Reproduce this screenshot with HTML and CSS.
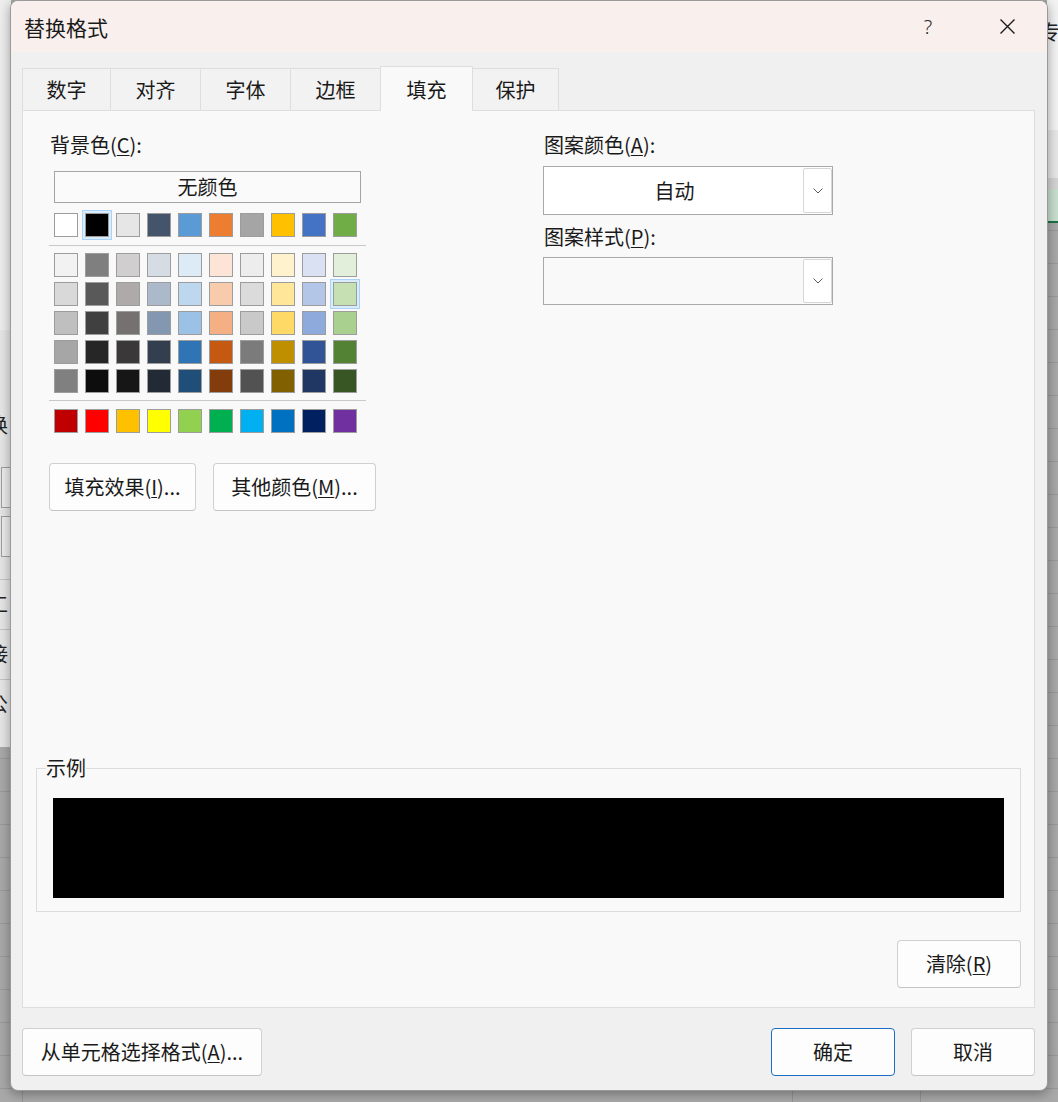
FILE: index.html
```html
<!DOCTYPE html>
<html lang="zh-CN">
<head>
<meta charset="utf-8">
<title>替换格式</title>
<link rel="stylesheet" href="styles.css">
</head>
<body>
<div class="desktop">
  <div class="behind-top">专</div>
  <div class="behind-window">
    <div class="bw-text bw-first">换</div>
    <div class="bw-input"></div>
    <div class="bw-input"></div>
    <div class="bw-row">工</div>
    <div class="bw-row">接</div>
    <div class="bw-row">公</div>
  </div>

  <div class="dialog">
    <div class="titlebar">
      <div class="title">替换格式</div>
      <div class="tb-btn help">?</div>
      <div class="tb-btn close">
        <svg width="15" height="15" viewBox="0 0 15 15"><path d="M0.5 0.5 L14.5 14.5 M14.5 0.5 L0.5 14.5" stroke="#1a1a1a" stroke-width="1.4" fill="none"/></svg>
      </div>
    </div>

    <div class="dlg-body">
      <div class="tabs">
        <div class="tab t1">数字</div>
        <div class="tab t2">对齐</div>
        <div class="tab t3">字体</div>
        <div class="tab t4">边框</div>
        <div class="tab t5 active">填充</div>
        <div class="tab t6">保护</div>
      </div>

      <div class="panel">
        <div class="top">
          <div class="left-col">
            <div class="label">背景色(<u>C</u>):</div>
            <div class="nocolor">无颜色</div>
            <div class="swatches theme">
              <div class="sw" style="background:#FFFFFF"></div>
              <div class="sw selected" style="background:#000000"></div>
              <div class="sw" style="background:#E7E6E6"></div>
              <div class="sw" style="background:#44546A"></div>
              <div class="sw" style="background:#5B9BD5"></div>
              <div class="sw" style="background:#ED7D31"></div>
              <div class="sw" style="background:#A5A5A5"></div>
              <div class="sw" style="background:#FFC000"></div>
              <div class="sw" style="background:#4472C4"></div>
              <div class="sw" style="background:#70AD47"></div>
            </div>
            <div class="sep"></div>
            <div class="swatches tints">
              <div class="sw" style="background:#F2F2F2"></div>
              <div class="sw" style="background:#7F7F7F"></div>
              <div class="sw" style="background:#D0CECE"></div>
              <div class="sw" style="background:#D6DCE4"></div>
              <div class="sw" style="background:#DDEBF7"></div>
              <div class="sw" style="background:#FCE4D6"></div>
              <div class="sw" style="background:#EDEDED"></div>
              <div class="sw" style="background:#FFF2CC"></div>
              <div class="sw" style="background:#D9E1F2"></div>
              <div class="sw" style="background:#E2EFDA"></div>

              <div class="sw" style="background:#D9D9D9"></div>
              <div class="sw" style="background:#595959"></div>
              <div class="sw" style="background:#AEAAAA"></div>
              <div class="sw" style="background:#ACB9CA"></div>
              <div class="sw" style="background:#BDD7EE"></div>
              <div class="sw" style="background:#F8CBAD"></div>
              <div class="sw" style="background:#DBDBDB"></div>
              <div class="sw" style="background:#FFE699"></div>
              <div class="sw" style="background:#B4C6E7"></div>
              <div class="sw hover" style="background:#C6E0B4"></div>

              <div class="sw" style="background:#BFBFBF"></div>
              <div class="sw" style="background:#404040"></div>
              <div class="sw" style="background:#757171"></div>
              <div class="sw" style="background:#8497B0"></div>
              <div class="sw" style="background:#9BC2E6"></div>
              <div class="sw" style="background:#F4B084"></div>
              <div class="sw" style="background:#C9C9C9"></div>
              <div class="sw" style="background:#FFD966"></div>
              <div class="sw" style="background:#8EA9DB"></div>
              <div class="sw" style="background:#A9D08E"></div>

              <div class="sw" style="background:#A6A6A6"></div>
              <div class="sw" style="background:#262626"></div>
              <div class="sw" style="background:#3A3838"></div>
              <div class="sw" style="background:#333F4F"></div>
              <div class="sw" style="background:#2F75B5"></div>
              <div class="sw" style="background:#C65911"></div>
              <div class="sw" style="background:#7B7B7B"></div>
              <div class="sw" style="background:#BF8F00"></div>
              <div class="sw" style="background:#305496"></div>
              <div class="sw" style="background:#548235"></div>

              <div class="sw" style="background:#808080"></div>
              <div class="sw" style="background:#0D0D0D"></div>
              <div class="sw" style="background:#161616"></div>
              <div class="sw" style="background:#222B35"></div>
              <div class="sw" style="background:#1F4E78"></div>
              <div class="sw" style="background:#833C0C"></div>
              <div class="sw" style="background:#525252"></div>
              <div class="sw" style="background:#806000"></div>
              <div class="sw" style="background:#203764"></div>
              <div class="sw" style="background:#375623"></div>
            </div>
            <div class="sep sep2"></div>
            <div class="swatches std">
              <div class="sw" style="background:#C00000"></div>
              <div class="sw" style="background:#FF0000"></div>
              <div class="sw" style="background:#FFC000"></div>
              <div class="sw" style="background:#FFFF00"></div>
              <div class="sw" style="background:#92D050"></div>
              <div class="sw" style="background:#00B050"></div>
              <div class="sw" style="background:#00B0F0"></div>
              <div class="sw" style="background:#0070C0"></div>
              <div class="sw" style="background:#002060"></div>
              <div class="sw" style="background:#7030A0"></div>
            </div>
            <div class="btn-row">
              <button class="btn fx">填充效果(<u>I</u>)...</button>
              <button class="btn more">其他颜色(<u>M</u>)...</button>
            </div>
          </div>

          <div class="right-col">
            <div class="label">图案颜色(<u>A</u>):</div>
            <div class="dropdown dd1">
              <div class="dd-text">自动</div>
              <div class="dd-btn">
                <svg width="10" height="6" viewBox="0 0 10 6"><path d="M0.5 0.5 L5 5 L9.5 0.5" stroke="#5a5a5a" stroke-width="1" fill="none"/></svg>
              </div>
            </div>
            <div class="label label2">图案样式(<u>P</u>):</div>
            <div class="dropdown dd2">
              <div class="dd-text"></div>
              <div class="dd-btn">
                <svg width="10" height="6" viewBox="0 0 10 6"><path d="M0.5 0.5 L5 5 L9.5 0.5" stroke="#5a5a5a" stroke-width="1" fill="none"/></svg>
              </div>
            </div>
          </div>
        </div>

        <fieldset class="sample">
          <legend>示例</legend>
          <div class="sample-box"></div>
        </fieldset>

        <div class="clear-row">
          <button class="btn clear">清除(<u>R</u>)</button>
        </div>
      </div>

      <div class="footer">
        <button class="btn pick">从单元格选择格式(<u>A</u>)...</button>
        <div class="footer-right">
          <button class="btn ok">确定</button>
          <button class="btn cancel">取消</button>
        </div>
      </div>
    </div>
  </div>
</div>
</body>
</html>
```

FILE: styles.css
```css
* { box-sizing: border-box; }

html, body {
  margin: 0;
  padding: 0;
}

body {
  width: 1058px;
  height: 1102px;
  overflow: hidden;
  font-family: "Noto Sans CJK SC", "Noto Sans", sans-serif;
  color: #1a1a1a;
}

u {
  text-decoration: underline;
  text-decoration-thickness: 1px;
  text-underline-offset: 2px;
}

/* ---------- backdrop (Excel window behind) ---------- */
.desktop {
  position: relative;
  width: 1058px;
  height: 1102px;
  overflow: hidden;
  background:
    linear-gradient(#1e7145, #1e7145) right 0 top 221px / 11px 2px no-repeat,
    linear-gradient(#c7dfd0, #c7dfd0) right 0 top 189px / 11px 32px no-repeat,
    linear-gradient(#d4d4d4, #d4d4d4) right 0 top 178px / 11px 11px no-repeat,
    linear-gradient(#e7e7e7, #e7e7e7) right 0 top 130px / 11px 48px no-repeat,
    linear-gradient(#f3f3f3, #f3f3f3) right 0 top 0 / 11px 130px no-repeat,
    linear-gradient(#eeeeee, #eeeeee) left 0 top 0 / 11px 330px no-repeat,
    linear-gradient(#959595, #959595) 22px 1090px / 1px 12px no-repeat,
    linear-gradient(#959595, #959595) 792px 1090px / 1px 12px no-repeat,
    linear-gradient(#959595, #959595) 920px 1090px / 1px 12px no-repeat,
    repeating-linear-gradient(to bottom, transparent 0 32px, #999999 32px 33px),
    #a9a9a9;
}

.behind-top {
  position: absolute;
  left: 1040px;
  top: 20px;
  font-size: 20px;
  line-height: 24px;
  color: #222;
}

.behind-window {
  position: absolute;
  left: -300px;
  top: 330px;
  width: 312px;
  height: 417px;
  background: #e6e6e6;
  padding-left: 288px;
  padding-top: 83px;
  display: flex;
  flex-direction: column;
  font-size: 20px;
  line-height: 24px;
  color: #222;
}

.bw-input {
  margin-left: 13px;
  width: 40px;
  height: 41px;
  border: 1px solid #9e9e9e;
  background: #ececec;
  margin-top: 8px;
}

.bw-first + .bw-input { margin-top: 30px; }

.bw-row {
  height: 50px;
  padding-top: 12px;
  border-top: 1px solid #c4c4c4;
}

.bw-input + .bw-row { margin-top: 22px; }

/* ---------- dialog ---------- */
.dialog {
  position: absolute;
  left: 10px;
  top: 0;
  width: 1038px;
  height: 1091px;
  border: 1px solid #9a9a9a;
  border-radius: 8px;
  background: #f0f0f0;
  overflow: hidden;
  box-shadow: 0 3px 12px rgba(0, 0, 0, 0.35);
}

.titlebar {
  height: 51px;
  background: #f9f0ee;
  display: flex;
  align-items: center;
  padding-left: 13px;
  padding-right: 17px;
}

.title {
  font-size: 21px;
  line-height: 26px;
  flex: 1;
  color: #1a1a1a;
}

.tb-btn {
  display: flex;
  align-items: center;
  justify-content: center;
  height: 40px;
}

.help {
  width: 40px;
  margin-right: 36px;
  font-family: "Noto Sans", sans-serif;
  font-size: 20px;
  font-weight: 300;
  color: #2a2a2a;
}

.close {
  width: 46px;
}

.dlg-body {
  padding: 14px 12px 0 11px;
}

/* tabs */
.tabs {
  display: flex;
  align-items: flex-end;
  height: 44px;
}

.tab {
  height: 42px;
  border-left: 1px solid #dedede;
  border-top: 1px solid #dedede;
  background: #f2f2f2;
  font-size: 20px;
  line-height: 24px;
  display: flex;
  align-items: center;
  justify-content: center;
}

.t1 { width: 88px; }
.t2 { width: 90px; }
.t3 { width: 90px; }
.t4 { width: 90px; }
.t5 { width: 93px; }
.t6 { width: 87px; border-right: 1px solid #dedede; }

.tab.active {
  position: relative;
  z-index: 2;
  height: 45px;
  margin-bottom: -1px;
  margin-right: -1px;
  background: #f9f9f9;
  border-right: 1px solid #dedede;
  padding-top: 2px;
}

/* panel */
.panel {
  height: 898px;
  border: 1px solid #dedede;
  background: #f9f9f9;
  display: flex;
  flex-direction: column;
  padding: 22px 0 19px 0;
}

.top {
  display: flex;
  padding-left: 26px;
}

.left-col {
  width: 327px;
  display: flex;
  flex-direction: column;
}

.right-col {
  width: 290px;
  margin-left: 167px;
  display: flex;
  flex-direction: column;
}

.label {
  font-size: 20px;
  line-height: 24px;
  height: 24px;
  padding-left: 1px;
  white-space: nowrap;
}

.nocolor {
  margin: 14px 0 0 5px;
  width: 307px;
  height: 32px;
  border: 1px solid #a4a4a4;
  background: #fafafa;
  font-size: 20px;
  line-height: 30px;
  text-align: center;
}

.swatches {
  display: grid;
  grid-template-columns: repeat(10, 24px);
  column-gap: 7px;
  row-gap: 5px;
  margin-left: 5px;
}

.theme { margin-top: 10px; }
.tints { margin-top: 7px; }
.std { margin-top: 8px; }

.sw {
  width: 24px;
  height: 24px;
  border: 1px solid #9c9c9c;
}

.sw.selected,
.sw.hover {
  box-shadow: 0 0 0 2px #d9ecfc, 0 0 0 3px #a9d4f7;
}

.sep {
  width: 317px;
  height: 1px;
  background: #c9c9c9;
  margin-top: 8px;
}

.sep2 { margin-top: 7px; }

.btn {
  font-family: "Noto Sans CJK SC", "Noto Sans", sans-serif;
  font-size: 20px;
  line-height: 24px;
  color: #1a1a1a;
  background: #fdfdfd;
  border: 1px solid #d0d0d0;
  border-bottom-color: #c4c4c4;
  border-radius: 4px;
  height: 48px;
  padding: 0;
  text-align: center;
  white-space: nowrap;
}

.btn-row {
  display: flex;
  gap: 17px;
  margin-top: 30px;
}

.fx { width: 147px; }
.more { width: 163px; }

/* dropdowns */
.dropdown {
  width: 290px;
  height: 49px;
  border: 1px solid #a9a9a9;
  display: flex;
  align-items: stretch;
}

.dd1 {
  margin-top: 9px;
  background: #ffffff;
}

.dd2 {
  margin-top: 8px;
  height: 48px;
  background: #f9f9f9;
}

.label2 { margin-top: 10px; }

.dd-text {
  flex: 1;
  font-size: 20px;
  line-height: 24px;
  display: flex;
  align-items: center;
  justify-content: center;
  padding-left: 2px;
}

.dd-btn {
  width: 29px;
  margin: 1px 0 1px 0;
  border: 1px solid #d6d6d6;
  border-radius: 2px;
  background: #ffffff;
  display: flex;
  align-items: center;
  justify-content: center;
}

/* sample */
.sample {
  margin: auto 13px 0 13px;
  padding: 18px 16px 13px 9px;
  border: 1px solid #dcdcdc;
  min-inline-size: 0;
}

.sample legend {
  padding: 0;
  font-size: 20px;
  line-height: 24px;
}

.sample-box {
  margin-left: 7px;
  height: 100px;
  background: #000000;
}

.clear-row {
  display: flex;
  justify-content: flex-end;
  margin: 28px 13px 0 0;
}

.clear { width: 124px; }

/* footer */
.footer {
  display: flex;
  justify-content: space-between;
  margin-top: 20px;
}

.pick { width: 240px; }

.footer-right {
  display: flex;
  gap: 16px;
}

.ok {
  width: 124px;
  border: 1px solid #1a6fc4;
}

.cancel { width: 124px; }
```
